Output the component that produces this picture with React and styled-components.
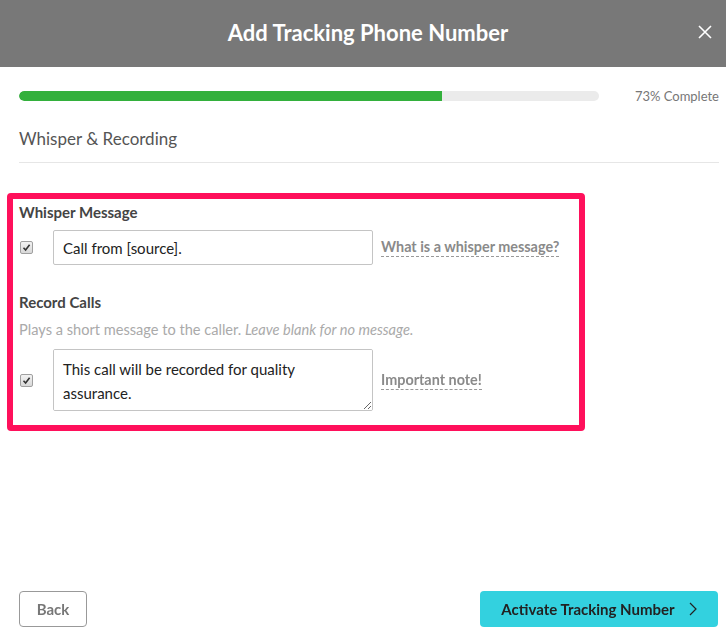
import styled, { createGlobalStyle } from "styled-components";

const GlobalStyle = createGlobalStyle`
  body {
    margin: 0;
    font-family: Lato, "Liberation Sans", sans-serif;
    background: #fff;
  }
`;

export default function App() {
  return (
    <Modal>
      <GlobalStyle />
      <Header>
        <span />
        <Title>Add Tracking Phone Number</Title>
        <CloseButton aria-label="Close">
          <svg width="14" height="14" viewBox="0 0 14 14">
            <path d="M1 1L13 13M13 1L1 13" stroke="#fff" strokeWidth="1.6" />
          </svg>
        </CloseButton>
      </Header>

      <Body>
        <ProgressRow>
          <Track>
            <Fill style={{ width: "73%" }} />
          </Track>
          <ProgressLabel>73% Complete</ProgressLabel>
        </ProgressRow>

        <StepTitle>Whisper &amp; Recording</StepTitle>

        <Highlight>
          <FieldLabel>Whisper Message</FieldLabel>
          <FieldRow>
            <Check />
            <TextInput defaultValue="Call from [source]." />
            <HelpLink>What is a whisper message?</HelpLink>
          </FieldRow>

          <FieldLabel $spaced>Record Calls</FieldLabel>
          <Hint>
            Plays a short message to the caller. <em>Leave blank for no message.</em>
          </Hint>
          <FieldRow>
            <Check />
            <TextArea defaultValue="This call will be recorded for quality assurance." />
            <HelpLink>Important note!</HelpLink>
          </FieldRow>
        </Highlight>
      </Body>

      <Footer>
        <BackButton>Back</BackButton>
        <PrimaryButton>
          Activate Tracking Number
          <svg width="8" height="14" viewBox="0 0 8 14">
            <path d="M1 1L7 7L1 13" fill="none" stroke="#222" strokeWidth="1.2" />
          </svg>
        </PrimaryButton>
      </Footer>
    </Modal>
  );
}

function Check() {
  return (
    <CheckBox>
      <svg width="9" height="9" viewBox="0 0 9 9">
        <path d="M1.5 4.8L3.6 7L7.6 1.8" fill="none" stroke="#333" strokeWidth="1.6" />
      </svg>
    </CheckBox>
  );
}

const Modal = styled.div`
  width: 726px;
  height: 639px;
  display: flex;
  flex-direction: column;
  background: #fff;
`;

const Header = styled.div`
  height: 67px;
  box-sizing: border-box;
  background: #787878;
  display: grid;
  grid-template-columns: 1fr auto 1fr;
  align-items: center;
  padding: 0 14px 3px 24px;
`;

const Title = styled.h1`
  margin: 0;
  color: #fff;
  font-size: 22px;
  font-weight: 700;
`;

const CloseButton = styled.button`
  justify-self: end;
  background: none;
  border: 0;
  padding: 0;
  width: 14px;
  height: 14px;
  display: flex;
  cursor: pointer;
`;

const Body = styled.div`
  padding: 21px 7px 0 19px;
`;

const ProgressRow = styled.div`
  display: flex;
  align-items: center;
  gap: 36px;
`;

const Track = styled.div`
  flex: 1;
  height: 10px;
  border-radius: 5px;
  background: #ebebeb;
  overflow: hidden;
`;

const Fill = styled.div`
  height: 100%;
  background: #33b03c;
  border-radius: 5px 0 0 5px;
`;

const ProgressLabel = styled.span`
  font-size: 13px;
  color: #777;
`;

const StepTitle = styled.h2`
  margin: 24px 0 0;
  padding-bottom: 13px;
  border-bottom: 1px solid #e6e6e6;
  font-size: 17px;
  font-weight: 400;
  color: #555;
`;

const Highlight = styled.div`
  margin: 30px 0 0 -12px;
  width: 578px;
  box-sizing: border-box;
  border: 6px solid #ff105b;
  border-radius: 4px;
  padding: 3px 6px 14px;
`;

const FieldLabel = styled.div`
  font-size: 15px;
  font-weight: 700;
  line-height: 20px;
  color: #444;
  margin-top: ${(p) => (p.$spaced ? "27px" : "0")};
  margin-bottom: 8px;
`;

const Hint = styled.div`
  font-size: 14.6px;
  line-height: 20px;
  color: #aaa;
  margin-bottom: 9px;

  em {
    font-style: italic;
  }
`;

const FieldRow = styled.div`
  display: grid;
  grid-template-columns: 26px 320px auto;
  align-items: center;
  column-gap: 8px;
  justify-content: start;
`;

const CheckBox = styled.span`
  width: 11px;
  height: 11px;
  margin-left: 1px;
  border: 1px solid #a0a0a0;
  border-radius: 2px;
  background: linear-gradient(#f2f2f2, #d8d8d8);
  display: flex;
  align-items: center;
  justify-content: center;
`;

const TextInput = styled.input`
  box-sizing: border-box;
  width: 320px;
  height: 35px;
  padding: 0 9px;
  border: 1px solid #c4c4c4;
  border-radius: 2px;
  font-family: inherit;
  font-size: 15px;
  color: #222;
  outline: none;
`;

const TextArea = styled.textarea`
  box-sizing: border-box;
  width: 320px;
  height: 62px;
  padding: 7px 9px;
  border: 1px solid #c4c4c4;
  border-radius: 2px;
  font-family: inherit;
  font-size: 15px;
  line-height: 24px;
  color: #222;
  outline: none;
`;

const HelpLink = styled.a`
  font-size: 14.4px;
  font-weight: 700;
  color: #8a8a8a;
  border-bottom: 1px dashed #999;
  padding-bottom: 1px;
  cursor: help;
`;

const Footer = styled.div`
  margin-top: auto;
  display: flex;
  justify-content: space-between;
  align-items: center;
  padding: 0 8px 12px 19px;
`;

const BackButton = styled.button`
  width: 68px;
  height: 36px;
  border: 1px solid #999;
  border-radius: 4px;
  background: #fff;
  font-family: inherit;
  font-size: 15px;
  font-weight: 700;
  color: #777;
  cursor: pointer;
`;

const PrimaryButton = styled.button`
  width: 238px;
  height: 36px;
  border: 0;
  border-radius: 4px;
  background: #33d1df;
  font-family: inherit;
  font-size: 15px;
  font-weight: 700;
  color: #222;
  display: flex;
  align-items: center;
  justify-content: center;
  gap: 14px;
  cursor: pointer;
`;
